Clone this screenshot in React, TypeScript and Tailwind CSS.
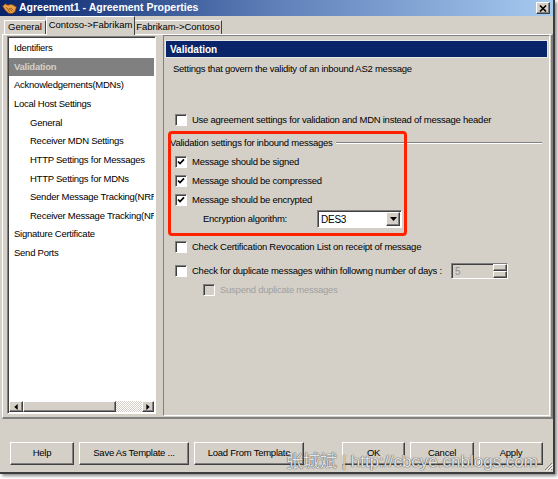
import type { ReactNode } from "react";

const TREE: { label: string; indent?: boolean; selected?: boolean }[] = [
  { label: "Identifiers" },
  { label: "Validation", selected: true },
  { label: "Acknowledgements(MDNs)" },
  { label: "Local Host Settings" },
  { label: "General", indent: true },
  { label: "Receiver MDN Settings", indent: true },
  { label: "HTTP Settings for Messages", indent: true },
  { label: "HTTP Settings for MDNs", indent: true },
  { label: "Sender Message Tracking(NRR)", indent: true },
  { label: "Receiver Message Tracking(NRR)", indent: true },
  { label: "Signature Certificate" },
  { label: "Send Ports" },
];

const SUNKEN =
  "border border-t-[#808080] border-l-[#808080] border-b-white border-r-white";
const RAISED =
  "border border-t-white border-l-white border-b-[#404040] border-r-[#404040] shadow-[inset_-1px_-1px_0_#808080]";

function Check({ checked, disabled }: { checked?: boolean; disabled?: boolean }) {
  return (
    <span
      className={`relative h-[12px] w-[12px] shrink-0 ${SUNKEN} shadow-[inset_1px_1px_0_#404040] ${
        disabled ? "bg-[#d4d0c8]" : "bg-white"
      }`}
    >
      {checked ? (
        <svg viewBox="0 0 10 10" className="absolute left-0 top-0 h-[10px] w-[10px]">
          <path d="M2 4.5l2 2 4-4.2" stroke="#000" strokeWidth="1.7" fill="none" />
        </svg>
      ) : null}
    </span>
  );
}

function CheckRow({
  label,
  checked,
  disabled,
  className,
}: {
  label: string;
  checked?: boolean;
  disabled?: boolean;
  className?: string;
}) {
  return (
    <div className={`flex h-4 items-center gap-[5px] ${className ?? ""}`}>
      <Check checked={checked} disabled={disabled} />
      <span className={disabled ? "text-[#a0a0a0]" : "text-black"}>{label}</span>
    </div>
  );
}

function Button({ children, w }: { children: ReactNode; w: string }) {
  return (
    <div className={`flex h-[23px] items-center justify-center bg-[#d4d0c8] ${RAISED} ${w}`}>
      {children}
    </div>
  );
}

function Handshake() {
  return (
    <svg viewBox="0 0 16 14" className="h-[13px] w-[15px] shrink-0">
      <path d="M0.5 4.5l3-2.5 3 1.5 2-1 3 0.5 4 2.5-1.5 5-3 2-4-0.5-3.5-3z" fill="#e9a046" stroke="#7a3d10" strokeWidth="0.8" />
      <path d="M4 5.5l3 2.5 2.5-1.5 2.5 2.5M6 8.5l2.5 2M8 7.5l3 2.5" stroke="#7a3d10" strokeWidth="0.7" fill="none" />
    </svg>
  );
}

export default function App() {
  return (
    <div className="relative h-[479px] w-[558px] overflow-hidden bg-white font-['Liberation_Sans',Arial,sans-serif] text-[9.5px] tracking-[-0.25px] text-black">
      <div className="flex h-[474px] w-[555px] flex-col border-b-2 border-r-2 border-[#3c3c3c] bg-[#d4d0c8] shadow-[2px_2px_3px_rgba(0,0,0,0.45)]">
        {/* title bar */}
        <div className="flex h-[16px] shrink-0 items-center bg-gradient-to-r from-[#0a246a] via-[#5f80b9] to-[#a6caf0] pl-[2px] pr-[3px]">
          <Handshake />
          <span className="ml-[2px] text-[10.5px] font-bold tracking-normal text-white">
            Agreement1 - Agreement Properties
          </span>
          <div className={`ml-auto flex h-[12px] w-[14px] items-center justify-center bg-[#d4d0c8] ${RAISED}`}>
            <svg viewBox="0 0 8 7" className="h-[7px] w-[8px]">
              <path d="M1 0.5l6 6M7 0.5l-6 6" stroke="#000" strokeWidth="1.6" />
            </svg>
          </div>
        </div>

        {/* tabs */}
        <div className="relative z-10 flex h-[18px] shrink-0 items-end pl-[4px] tracking-normal">
          <div className="flex h-[14px] w-[42px] items-center justify-center border-l border-r border-t border-l-white border-r-[#404040] border-t-white">
            General
          </div>
          <div className="-mb-px flex h-[19px] w-[89px] items-center justify-center border-l border-r border-t border-l-white border-r-[#404040] border-t-white bg-[#d4d0c8] pb-[2px]">
            Contoso-&gt;Fabrikam
          </div>
          <div className="flex h-[14px] w-[87px] items-center justify-center border-r border-t border-r-[#404040] border-t-white">
            Fabrikam-&gt;Contoso
          </div>
        </div>

        {/* tab page */}
        <div className="ml-[2px] flex h-[385px] shrink-0 border-l border-t border-r-2 border-b-2 border-l-white border-t-white border-r-[#808080] border-b-[#808080]">
          {/* tree */}
          <div className={`ml-[4px] mt-[1px] flex h-[378px] w-[149px] shrink-0 flex-col ${SUNKEN} shadow-[inset_1px_1px_0_#404040] bg-white p-px`}>
            <div className="flex-1 overflow-hidden pt-px">
              {TREE.map((t) => (
                <div
                  key={t.label}
                  className={`flex h-[18.64px] items-center overflow-hidden whitespace-nowrap ${
                    t.indent ? "pl-[21px]" : "pl-[5px]"
                  } ${t.selected ? "bg-[#808080] font-bold text-[#d4d0c8]" : ""}`}
                >
                  {t.label}
                </div>
              ))}
            </div>
            <div className="flex h-[11px] shrink-0">
              <div className={`flex w-[14px] items-center justify-center bg-[#d4d0c8] ${RAISED}`}>
                <svg viewBox="0 0 4 7" className="h-[6px] w-[4px]"><path d="M4 0v7L0 3.5z" fill="#000" /></svg>
              </div>
              <div className={`w-[93px] bg-[#d4d0c8] ${RAISED}`} />
              <div className="flex-1 bg-[repeating-conic-gradient(#fff_0_25%,#d4d0c8_0_50%)] bg-[length:2px_2px]" />
              <div className={`flex w-[12px] items-center justify-center bg-[#d4d0c8] ${RAISED}`}>
                <svg viewBox="0 0 4 7" className="h-[6px] w-[4px]"><path d="M0 0v7l4-3.5z" fill="#000" /></svg>
              </div>
            </div>
          </div>

          {/* right panel */}
          <div className="relative ml-[7px] flex h-[381px] w-[387px] shrink-0 flex-col border border-l-[#808080] border-t-[#808080] border-b-white border-r-white px-[1px] pt-[4px]">
            <div className="flex h-[18px] shrink-0 items-center border border-[#e8e8e8] bg-[#0a246a] pl-[4px] text-[10px] font-bold tracking-normal text-white">
              Validation
            </div>
            <div className="flex flex-col pl-[8px]">
              <div className="mt-[4px] flex h-[14px] items-center">
                Settings that govern the validity of an inbound AS2 message
              </div>
              <CheckRow
                className="ml-[2px] mt-[36px]"
                label="Use agreement settings for validation and MDN instead of message header"
              />
              <div className="-ml-[3px] mt-[7px] flex h-4 items-center gap-[3px] pr-[6px]">
                <span className="whitespace-nowrap">Validation settings for inbound messages</span>
                <div className="h-[2px] flex-1 border-b border-t border-b-white border-t-[#808080]" />
              </div>
              <CheckRow className="ml-[2px] mt-[3px]" checked label="Message should be signed" />
              <CheckRow className="ml-[2px] mt-[3px]" checked label="Message should be compressed" />
              <CheckRow className="ml-[2px] mt-[3px]" checked label="Message should be encrypted" />
              <div className="ml-[30px] mt-[2px] flex h-[18px] items-center">
                <span className="w-[114px]">Encryption algorithm:</span>
                <div className={`flex h-[18px] w-[85px] items-center bg-white ${SUNKEN} shadow-[inset_1px_1px_0_#404040]`}>
                  <span className="flex-1 pl-[3px] text-[10px]">DES3</span>
                  <div className={`mr-px flex h-[14px] w-[14px] items-center justify-center bg-[#d4d0c8] ${RAISED}`}>
                    <svg viewBox="0 0 7 4" className="h-[4px] w-[7px]"><path d="M0 0h7L3.5 4z" fill="#000" /></svg>
                  </div>
                </div>
              </div>
              <CheckRow
                className="ml-[2px] mt-[11px]"
                label="Check Certification Revocation List on receipt of message"
              />
              <div className="ml-[2px] mt-[8px] flex h-4 items-center">
                <div className="flex items-center gap-[5px]">
                  <Check />
                  <span>Check for duplicate messages within followng number of days :</span>
                </div>
                <div className={`ml-auto mr-[40px] flex h-[16px] w-[57px] items-center bg-[#d4d0c8] ${SUNKEN} shadow-[inset_1px_1px_0_#404040]`}>
                  <span className="flex-1 pl-[3px] text-[10px] text-[#909090]">5</span>
                  <div className="flex h-full w-[14px] flex-col">
                    <div className={`flex-1 bg-[#d4d0c8] ${RAISED}`} />
                    <div className={`flex-1 bg-[#d4d0c8] ${RAISED}`} />
                  </div>
                </div>
              </div>
              <CheckRow className="ml-[30px] mt-[3px]" disabled label="Suspend duplicate messages" />
            </div>

            {/* red annotation box */}
            <div className="pointer-events-none absolute left-[4px] top-[95px] h-[105px] w-[239px] rounded-[4px] border-[3px] border-[#ff2200]" />
          </div>
        </div>

        {/* buttons */}
        <div className="mt-[23px] flex shrink-0 pl-[10px]">
          <Button w="w-[64px]">Help</Button>
          <div className="w-[5px]" />
          <Button w="w-[110px]">Save As Template ...</Button>
          <div className="w-[5px]" />
          <Button w="w-[110px] overflow-hidden whitespace-nowrap">Load From Template</Button>
          <div className="w-[38px]" />
          <Button w="w-[63px]">OK</Button>
          <div className="w-[5px]" />
          <Button w="w-[64px]">Cancel</Button>
          <div className="w-[5px]" />
          <Button w="w-[64px]">Apply</Button>
        </div>
      </div>

      {/* resize grip */}
      <svg viewBox="0 0 10 10" className="absolute left-[543px] top-[461px] h-[10px] w-[10px]">
        <path d="M9 2L2 9M9 5L5 9M9 8L8 9" stroke="#808080" strokeWidth="1" />
        <path d="M10 3L3 10M10 6L6 10" stroke="#fff" strokeWidth="1" />
      </svg>

      {/* blog watermark */}
      <div className="pointer-events-none absolute left-[286px] top-[452px] whitespace-nowrap font-['Liberation_Sans','Noto_Sans_CJK_SC',sans-serif] text-[17px] leading-[20px] tracking-normal text-white/85 [text-shadow:0_0_1px_#444,0_0_1px_#444]">
        张城斌 | http://cbcye.cnblogs.com
      </div>
    </div>
  );
}
